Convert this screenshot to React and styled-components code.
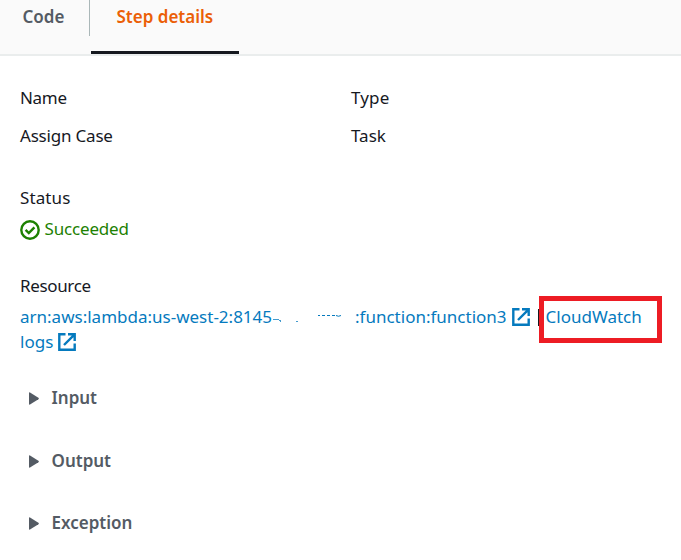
import React from "react";
import styled, { createGlobalStyle } from "styled-components";

const Global = createGlobalStyle`
  * { box-sizing: border-box; }
  body { margin: 0; background: #fff; }
`;

const Page = styled.main`
  width: 681px;
  height: 560px;
  overflow: hidden;
  color: #16191f;
  font: 17px/25px "Noto Sans", sans-serif;
`;

const Tabs = styled.nav`
  display: flex;
  height: 56px;
  background: #fafafa;
  border-bottom: 2px solid #eaeded;
`;

const Tab = styled.div`
  height: 54px;
  width: ${(p) => p.$width}px;
  padding: 4px 0 0 ${(p) => p.$inset}px;
  font-weight: 600;
  white-space: nowrap;
  color: ${(p) => (p.$active ? "#eb5f07" : "#545b64")};
  border-bottom: ${(p) => (p.$active ? "3px solid #16191f" : "0")};
`;

const Divider = styled.div`
  width: 1px;
  height: 36px;
  margin-right: 1px;
  background: #aab7b8;
`;

const Text = styled.span`
  letter-spacing: ${(p) => p.$track || 0}px;
  white-space: nowrap;
`;

const Details = styled.section`
  display: flex;
  flex-direction: column;
  padding: 29px 0 0 20px;
`;

const Columns = styled.div`
  display: grid;
  grid-template-columns: 331px 1fr;
  margin-bottom: 37px;
`;

const Field = styled.div`
  display: flex;
  flex-direction: column;
  gap: ${(p) => p.$gap}px;
  margin-bottom: ${(p) => p.$after || 0}px;
`;

const Status = styled.div`
  display: flex;
  align-items: center;
  gap: 4.5px;
  color: #1d8102;
  svg { margin-top: 3px; }
`;

const Line = styled.div`
  position: relative;
  display: flex;
  height: 25px;
  color: #057abe;
`;

const Redacted = styled.svg`
  width: 83px;
  height: 25px;
  flex: none;
`;

const External = styled.svg`
  width: 18px;
  height: 18px;
  flex: none;
  margin: 4px 0 0 5px;
`;

const Pipe = styled.div`
  width: 2px;
  height: 17px;
  margin: 5px 6px 0 8px;
  background: #16191f;
`;

const Highlight = styled.div`
  position: absolute;
  left: 519px;
  top: -8px;
  width: 123px;
  height: 47px;
  border: 5px solid #ed1c24;
`;

const Expanders = styled.div`
  display: flex;
  flex-direction: column;
  gap: 37.5px;
  padding: 31px 0 0 9px;
`;

const Expander = styled.div`
  display: flex;
  align-items: flex-start;
  gap: 12.5px;
  height: 25px;
  color: #545b64;
  font-weight: 600;
  svg { margin-top: 7px; }
`;

const ExternalIcon = () => (
  <External viewBox="0 0 18 18" fill="none" stroke="#057abe" strokeWidth="2.4">
    <path d="M7.5 1.3H1.3v15.4h15.4V10.5M10 1.3h6.7V8M16.4 1.6L6 12" />
  </External>
);

const sections = ["Input", "Output", "Exception"];

export default function App() {
  return (
    <Page>
      <Global />
      <Tabs>
        <Tab $width={89} $inset={22.5}><Text>Code</Text></Tab>
        <Divider />
        <Tab $active $width={148} $inset={25.5}><Text>Step details</Text></Tab>
      </Tabs>
      <Details>
        <Columns>
          <Field $gap={13}><Text $track={-0.3}>Name</Text><Text $track={-0.2}>Assign Case</Text></Field>
          <Field $gap={13}><Text $track={0.15}>Type</Text><Text>Task</Text></Field>
        </Columns>
        <Field $gap={6} $after={32}>
          <Text $track={0.1}>Status</Text>
          <Status>
            <svg width="20" height="20" viewBox="0 0 20 20" fill="none" stroke="#1d8102" strokeWidth="2.4">
              <circle cx="10" cy="10" r="8.7" />
              <path d="M5.6 9.8l3.2 3.2 5.6-5.7" />
            </svg>
            <Text $track={-0.17}>Succeeded</Text>
          </Status>
        </Field>
        <Field $gap={6}>
          <Text $track={-0.35}>Resource</Text>
          <div>
            <Line>
              <Text>arn:aws:lambda:us-west-2:8145</Text>
              <Redacted viewBox="0 0 83 25" fill="none" stroke="#057abe" strokeWidth="1">
                <path d="M1 15.5h6M7 16.5h2M8 17.5h1M24 17.5h2" opacity="0.75" />
                <path d="M46 11.5h2M50 11.5h3M55 11.5h3M60 11.5h3M64 11.5q2.5 1.5 5 0" />
              </Redacted>
              <Text>:function:function3</Text>
              <ExternalIcon />
              <Pipe />
              <Text>CloudWatch</Text>
              <Highlight />
            </Line>
            <Line>
              <Text>logs</Text>
              <ExternalIcon />
            </Line>
          </div>
        </Field>
        <Expanders>
          {sections.map((name) => (
            <Expander key={name}>
              <svg width="10" height="13" viewBox="0 0 10 13" fill="#545b64">
                <path d="M0 1Q0 0 1 .4L9.4 5.8Q10.3 6.5 9.4 7.2L1 12.6Q0 13 0 12Z" />
              </svg>
              <Text>{name}</Text>
            </Expander>
          ))}
        </Expanders>
      </Details>
    </Page>
  );
}
